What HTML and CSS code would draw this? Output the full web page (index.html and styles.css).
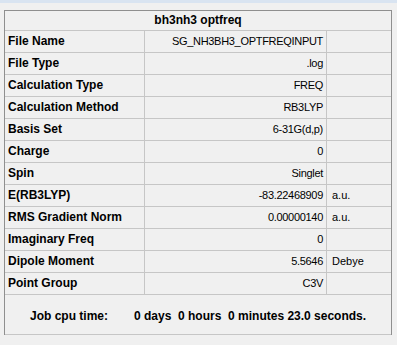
FILE: index.html
```html
<!DOCTYPE html>
<html>
<head>
<meta charset="utf-8">
<link rel="stylesheet" href="styles.css">
</head>
<body>
<div class="titlebar"></div>
<div class="panel">
  <div class="head">bh3nh3 optfreq</div>
  <div class="row"><div class="lbl">File Name</div><div class="val">SG_NH3BH3_OPTFREQINPUT</div><div class="unit"></div></div>
  <div class="row"><div class="lbl">File Type</div><div class="val">.log</div><div class="unit"></div></div>
  <div class="row"><div class="lbl">Calculation Type</div><div class="val">FREQ</div><div class="unit"></div></div>
  <div class="row"><div class="lbl">Calculation Method</div><div class="val">RB3LYP</div><div class="unit"></div></div>
  <div class="row"><div class="lbl">Basis Set</div><div class="val">6-31G(d,p)</div><div class="unit"></div></div>
  <div class="row"><div class="lbl">Charge</div><div class="val">0</div><div class="unit"></div></div>
  <div class="row"><div class="lbl">Spin</div><div class="val">Singlet</div><div class="unit"></div></div>
  <div class="row"><div class="lbl">E(RB3LYP)</div><div class="val">-83.22468909</div><div class="unit">a.u.</div></div>
  <div class="row"><div class="lbl">RMS Gradient Norm</div><div class="val">0.00000140</div><div class="unit">a.u.</div></div>
  <div class="row"><div class="lbl">Imaginary Freq</div><div class="val">0</div><div class="unit"></div></div>
  <div class="row"><div class="lbl">Dipole Moment</div><div class="val">5.5646</div><div class="unit">Debye</div></div>
  <div class="row"><div class="lbl">Point Group</div><div class="val">C3V</div><div class="unit"></div></div>
  <div class="job"><span class="job-lbl">Job cpu time:</span><span class="job-val">0 days  0 hours  0 minutes 23.0 seconds.</span></div>
</div>
</body>
</html>
```
FILE: styles.css
```css
html, body {
  margin: 0;
  padding: 0;
  background: #f0f0f0;
  font-family: "Liberation Sans", Arial, sans-serif;
  color: #000;
}
.titlebar {
  height: 3px;
  background: #d9e4f1;
}
.panel {
  margin: 7px 0 0 4px;
  width: 388px;
  box-sizing: border-box;
  border: 1px solid #8f8f8f;
  border-bottom: none;
}
.head {
  height: 20px;
  box-sizing: border-box;
  border-bottom: 1px solid #c6c6c6;
  text-align: center;
  font-weight: bold;
  font-size: 12px;
  line-height: 19px;
}
.row {
  display: grid;
  grid-template-columns: 140px 182px 1fr;
  height: 22px;
  box-sizing: border-box;
  border-bottom: 1px solid #c6c6c6;
  line-height: 21px;
}
.lbl {
  border-right: 1px solid #c6c6c6;
  font-weight: bold;
  font-size: 12px;
  padding-left: 3px;
  white-space: nowrap;
}
.val {
  border-right: 1px solid #c6c6c6;
  font-size: 11px;
  letter-spacing: -0.3px;
  text-align: right;
  padding-right: 3px;
  white-space: nowrap;
}
.unit {
  font-size: 11px;
  padding-left: 5px;
}
.job {
  display: flex;
  align-items: center;
  height: 40px;
  box-sizing: border-box;
  padding: 3px 0 0 25px;
  border-bottom: 1px solid #c6c6c6;
  font-weight: bold;
  font-size: 12px;
  white-space: pre;
}
.job-lbl {
  width: 104px;
}
```
